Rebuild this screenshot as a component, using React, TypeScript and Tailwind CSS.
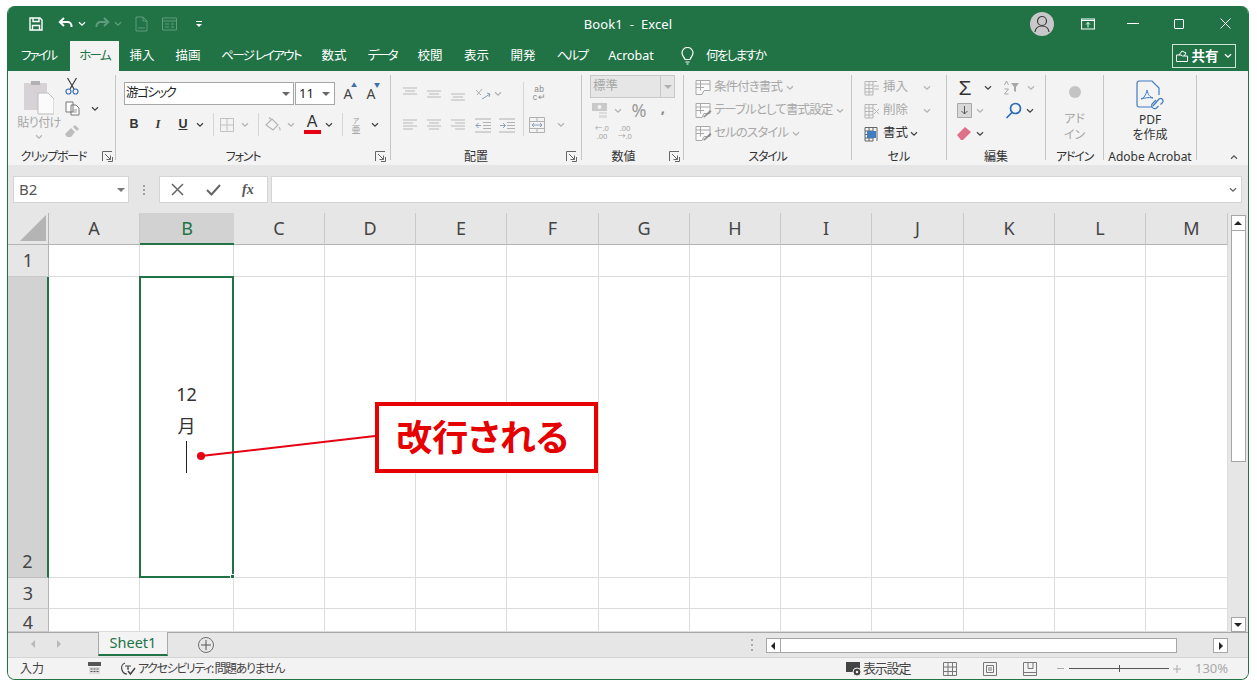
import React from "react";

const Chev = ({ c = "#555", up = false }: { c?: string; up?: boolean }) => (
  <svg width="10" height="6" viewBox="0 0 10 6" fill="none" className={up ? "rotate-180" : ""}>
    <path d="M2 1.200 5 4.200 8 1.200" stroke={c} strokeWidth="1.300" />
  </svg>
);
const G = "#b4b4b4";
const Launcher = () => (
  <svg width="11" height="11" viewBox="0 0 11 11" fill="none" stroke="#666">
    <path d="M.5 10V.5H10M3 3l5.500 5.500M8.500 4.500v4h-4M10.500 6v4.500H6" strokeWidth="1" />
  </svg>
);
const Sep = () => <div className="w-px h-[85px] mt-[4px] bg-[#c6c6c6] shrink-0" />;
const VSep = () => <div className="w-px h-[23px] bg-[#d6d6d6] shrink-0" />;
const Tri = ({ d, c = "#222" }: { d: "l" | "r" | "u" | "d"; c?: string }) => {
  const p = { l: "M6 1v8L2 5z", r: "M3 1v8l4-4z", u: "M1 7h8L5 3z", d: "M1 3h8L5 7z" }[d];
  return (
    <svg width="10" height="10" viewBox="0 0 10 10">
      <path d={p} fill={c} />
    </svg>
  );
};
const Lines = ({ kind }: { kind: string }) => {
  const rows: Record<string, string> = {
    t: "M2 3h14M4 6h10M2 9h14",
    m: "M2 6h14M4 9h10M2 12h14",
    b: "M2 9h14M4 12h10M2 15h14",
    l: "M2 4h14M2 7h10M2 10h14M2 13h10",
    c: "M2 4h14M4 7h10M2 10h14M4 13h10",
    r: "M2 4h14M6 7h10M2 10h14M6 13h10",
  };
  return (
    <svg width="18" height="18" viewBox="0 0 18 18" fill="none" stroke="#b9b9b9">
      <path d={rows[kind]} />
    </svg>
  );
};
const Indent = ({ flip }: { flip?: boolean }) => (
  <svg width="18" height="18" viewBox="0 0 18 18" fill="none" stroke="#b0b0b0">
    <path d="M1 3h16M9 6.500h8M9 9.500h8M9 12.500h8M1 16h16" />
    <path d={flip ? "M2 9.500h5M5 7l2.500 2.500L5 12" : "M7 9.500H2M4.500 7 2 9.500 4.500 12"} stroke="#8aa0b8" />
  </svg>
);
const Group = ({
  w,
  label,
  launcher,
  tight,
  children,
}: {
  w: string;
  label: string;
  launcher?: string;
  tight?: boolean;
  children: React.ReactNode;
}) => (
  <div className={`${w} h-full shrink-0 flex flex-col`}>
    <div className="h-[75px]">{children}</div>
    <div className="h-[19px] pt-[2px] flex items-center">
      <div className={`flex-1 text-center text-[12px] text-[#333] whitespace-nowrap ${tight ? "tracking-[-1.200px]" : ""}`}>{label}</div>
      {launcher && (
        <div className={`${launcher} flex justify-center items-center`}>
          <Launcher />
        </div>
      )}
    </div>
  </div>
);
const StyleIcon = ({ brush }: { brush?: boolean }) => (
  <svg width="17" height="17" viewBox="0 0 17 17" fill="none" stroke="#a8a8a8">
    <path d="M1 1.500h14v10H9l-2 4H1z" fill="#fafafa" />
    <path d="M1 5h14M1 8.500h8M5.500 1.500v10" />
    {brush && <path d="M8 15l7-7 1.500 1.500-7 6z" fill="#8d8d8d" stroke="none" />}
  </svg>
);
const CellIcon = ({ x, dark }: { x?: boolean; dark?: boolean }) => {
  const s = dark ? "#666" : "#b5b5b5";
  return (
    <svg width="16" height="16" viewBox="0 0 16 16" fill="none" stroke={s}>
      <path d="M1 1.500h12M1 5h8M1 8.500h8M1 12h8M1 15h8M1 1.500V15M5 1.500V15M9 1.500V15" />
      {x ? <path d="M10 6l5 5M15 6l-5 5" /> : dark ? <path d="M3 5h9v7H3z" fill="#3f7cc0" stroke="none" /> : <path d="M10 6h5M10 9h5" />}
      {dark && <path d="M13 1.500V15" />}
    </svg>
  );
};

const cols = ["A", "B", "C", "D", "E", "F", "G", "H", "I", "J", "K", "L", "M"];
const RowHead = ({ n, active, low }: { n: string; active?: boolean; low?: boolean }) => (
  <div
    className={`flex justify-center text-[18px] text-[#444] ${
      active
        ? "items-end pb-[2px] bg-[#d2d2d2] border-r-2 border-r-[#217346] border-b border-b-[#bdbdbd]"
        : "items-center bg-[#e6e6e6] border-r border-r-[#b4b4b4] border-b border-b-[#c9c9c9]"
    } ${low ? "pt-[4px] overflow-hidden" : ""}`}
  >
    {n}
  </div>
);
const Cell = () => <div className="bg-white border-r border-b border-[#dcdcdc]" />;

export default function App() {
  return (
    <div className="relative w-[1257px] h-[687px] bg-white pt-[6px] pl-[7px] font-['Noto_Sans','Noto_Sans_CJK_JP',sans-serif] [font-feature-settings:'palt'] overflow-hidden">
      <div className="w-[1242px] h-[674px] flex flex-col border-x border-b border-[#217346] rounded-[8px] overflow-hidden bg-[#e6e6e6]">
        {/* Title bar */}
        <div className="h-[35px] shrink-0 bg-[#217346] flex items-center text-white">
          <div className="ml-[21px] w-[14px] flex justify-center">
            <svg width="14" height="14" viewBox="0 0 14 14" fill="none" stroke="#fff" strokeWidth="1.400">
              <path d="M1 1h10l2 2v10H1z" />
              <path d="M4 1v3.500h6V1M3.500 13V8.500h7V13" />
            </svg>
          </div>
          <div className="ml-[15px] w-[16px] flex justify-center">
            <svg width="16" height="14" viewBox="0 0 16 14" fill="none" stroke="#fff" strokeWidth="2">
              <path d="M6 1 1.800 5 6 9M2 5h7.500a4 4 0 0 1 4 4v1" />
            </svg>
          </div>
          <div className="ml-[3px]"><Chev c="#fff" /></div>
          <div className="ml-[7px] w-[16px] flex justify-center">
            <svg width="16" height="14" viewBox="0 0 16 14" fill="none" stroke="#5f9c7d" strokeWidth="2">
              <path d="M10 1l4.200 4L10 9M14 5H6.500a4 4 0 0 0-4 4v1" />
            </svg>
          </div>
          <div className="ml-[3px]"><Chev c="#5f9c7d" /></div>
          <div className="ml-[11px] w-[14px] flex justify-center">
            <svg width="13" height="16" viewBox="0 0 13 16" fill="none" stroke="#5f9c7d">
              <path d="M1 1h7l4 4v10H1zM8 1v4h4M3 12h7" />
            </svg>
          </div>
          <div className="ml-[13px] w-[16px] flex justify-center">
            <svg width="15" height="14" viewBox="0 0 15 14" fill="none" stroke="#5f9c7d">
              <path d="M.5 1h14v12H.5zM.5 4h14M3 7h4M9 7h3M3 10h4M9 10h3" />
            </svg>
          </div>
          <div className="ml-[19px] w-[6px] flex flex-col items-center gap-[2px]">
            <div className="w-[6px] h-px bg-white" />
            <svg width="6" height="3" viewBox="0 0 6 3"><path d="M0 0h6L3 3z" fill="#fff" /></svg>
          </div>
          <div className="ml-[326px] w-[200px] text-center text-[13px] tracking-[0.1px] pt-[3px]">Book1&nbsp; -&nbsp; Excel</div>
          <div className="ml-[302px] w-[24px] h-[24px] rounded-full bg-[#c8c8c8] flex items-center justify-center">
            <svg width="16" height="18" viewBox="0 0 16 18" fill="none" stroke="#3a3a3a" strokeWidth="1.200">
              <circle cx="8" cy="6" r="4.500" />
              <path d="M1 17c.500-4 3-6 7-6s6.500 2 7 6" />
            </svg>
          </div>
          <div className="ml-[27px] w-[14px] flex justify-center">
            <svg width="14" height="12" viewBox="0 0 14 12" fill="none" stroke="#fff">
              <path d="M.5 1h13v10H.5zM.5 2.500h13" strokeWidth="1.200" />
              <path d="M7 9.500V4.500M5 6.500l2-2 2 2" />
            </svg>
          </div>
          <div className="ml-[32px] w-[12px] h-px bg-white" />
          <div className="ml-[35px] w-[10px] h-[10px] border border-white rounded-[1px]" />
          <div className="ml-[36px] w-[11px] flex justify-center">
            <svg width="11" height="11" viewBox="0 0 11 11" stroke="#fff"><path d="M.5.500l10 10M10.500.500l-10 10" /></svg>
          </div>
        </div>
        {/* Tabs */}
        <div className="h-[30px] shrink-0 bg-[#217346] flex items-stretch text-white text-[12.500px] whitespace-nowrap">
          <div className="w-[62px] flex items-center justify-center pr-[1px] tracking-[-2px]">ファイル</div>
          <div className="w-[49px] flex items-center justify-center bg-[#f3f3f3] text-[#217346] tracking-[-1.700px]">ホーム</div>
          <div className="w-[46px] flex items-center justify-center">挿入</div>
          <div className="w-[46px] flex items-center justify-center">描画</div>
          <div className="w-[100px] flex items-center justify-center tracking-[-1.700px]">ページ レイアウト</div>
          <div className="w-[46px] flex items-center justify-center">数式</div>
          <div className="w-[50px] flex items-center justify-center tracking-[-2px]">データ</div>
          <div className="w-[46px] flex items-center justify-center">校閲</div>
          <div className="w-[47px] flex items-center justify-center">表示</div>
          <div className="w-[46px] flex items-center justify-center">開発</div>
          <div className="w-[52px] flex items-center justify-center tracking-[-1.700px]">ヘルプ</div>
          <div className="w-[66px] flex items-center justify-center">Acrobat</div>
          <div className="ml-[16px] w-[14px] flex items-center justify-center">
            <svg width="13" height="18" viewBox="0 0 13 18" fill="none" stroke="#fff" strokeWidth="1.200">
              <path d="M4 12.500C3.500 10 1 9 1 6a5.500 5.500 0 0 1 11 0c0 3-2.500 4-3 6.500zM4.500 15h4M5.500 17h2" />
            </svg>
          </div>
          <div className="ml-[12px] flex items-center tracking-[-1.700px]">何をしますか</div>
          <div className="ml-auto mr-[12px] mt-[3px] mb-[3px] w-[64px] border border-[#cfe3d8] flex items-center justify-center gap-[4px] text-[13.500px] font-bold">
            <svg width="12" height="12" viewBox="0 0 12 12" fill="none" stroke="#fff">
              <path d="M.5 5v6.500h11V6H6.500L5 5zM3 5l3-4 4 2-2 3" />
            </svg>
            共有
            <Chev c="#fff" />
          </div>
        </div>
        {/* Ribbon */}
        <div className="h-[94px] shrink-0 bg-[#f3f3f3] flex items-start">
          <Group w="w-[107px]" label="クリップボード" launcher="w-[16px]" tight>
            <div className="flex">
              <div className="ml-[10px] w-[42px] flex flex-col items-center pt-[8px]">
                <svg width="30" height="36" viewBox="0 0 30 36" fill="none">
                  <path d="M0 4h23v27H0z" fill="#d6d2d5" />
                  <path d="M7 2h9v4H7z" fill="#b5b0b3" />
                  <path d="M14 14h10l6 6v15H14z" fill="#fbfbfb" stroke="#bdbdbd" />
                </svg>
                <div className="text-[12px] leading-[16px] text-[#a6a6a6] whitespace-nowrap tracking-[-0.500px]">貼り付け</div>
                <div className="mt-[3px]"><Chev c={G} /></div>
              </div>
              <div className="ml-[3px] w-[18px] flex flex-col items-center pt-[6px]">
                <svg width="14" height="18" viewBox="0 0 14 18" fill="none" stroke="#3c3c3c">
                  <path d="M2.500 1l6.500 11M11.500 1 5 12" strokeWidth="1.200" />
                  <circle cx="3.500" cy="14.500" r="2.500" stroke="#3a70b0" strokeWidth="1.200" />
                  <circle cx="10.500" cy="14.500" r="2.500" stroke="#3a70b0" strokeWidth="1.200" />
                </svg>
                <svg className="mt-[6px]" width="15" height="15" viewBox="0 0 15 15" fill="#fff" stroke="#777">
                  <path d="M1 1h7v10H1zM6 4h5l3 3v7H6z" />
                  <path d="M8 9h4M8 11h4" stroke="#999" />
                </svg>
                <svg className="mt-[9px]" width="14" height="13" viewBox="0 0 14 13" fill="#bdbdbd">
                  <path d="M0 9l6-6 4 4-4 5H2zM8 2l2-2 4 4-2 2z" />
                </svg>
              </div>
              <div className="ml-[9px] pt-[35px]"><Chev c="#444" /></div>
            </div>
          </Group>
          <Sep />
          <Group w="w-[274px]" label="フォント" launcher="w-[20px]" tight>
            <div className="pl-[8px] pt-[11px]">
              <div className="flex items-center h-[23px]">
                <div className="w-[170px] h-[23px] bg-white border border-[#a6a6a6] flex items-center pl-[1px] text-[12.500px] text-[#222]">
                  <span className="flex-1 tracking-[-1.500px]">游ゴシック</span>
                  <span className="w-[12px]"><Tri d="d" c="#666" /></span>
                </div>
                <div className="ml-px w-[40px] h-[23px] bg-white border border-[#a6a6a6] flex items-center pl-[3px] text-[13px] text-[#222]">
                  <span className="flex-1">11</span>
                  <span className="w-[13px]"><Tri d="d" c="#666" /></span>
                </div>
                <div className="ml-[3px] w-[20px] text-center text-[14px] text-[#444] relative">A<span className="absolute top-[-2px] left-[13px] text-[6px] text-[#3a70b0]">▲</span></div>
                <div className="ml-[3px] w-[20px] text-center text-[14px] text-[#444] relative">A<span className="absolute top-[-2px] left-[13px] text-[6px] text-[#3a70b0]">▼</span></div>
              </div>
              <div className="flex items-center h-[23px] mt-[8px] text-[#333]">
                <div className="w-[20px] text-center text-[12.500px] font-bold font-['Liberation_Sans']">B</div>
                <div className="ml-[4px] w-[20px] text-center text-[12.500px] font-bold italic font-['Liberation_Serif']">I</div>
                <div className="ml-[5px] w-[20px] text-center text-[12.500px] font-bold underline font-['Liberation_Sans']">U</div>
                <div className="ml-[2px]"><Chev c="#444" /></div>
                <div className="ml-[8px]"><VSep /></div>
                <div className="ml-[5px] w-[18px]">
                  <svg width="16" height="16" viewBox="0 0 16 16" fill="none" stroke="#c2c2c2">
                    <path d="M1.500 1.500h13v13h-13zM8 1.500v13M1.500 8h13" />
                  </svg>
                </div>
                <div className="ml-[3px]"><Chev c={G} /></div>
                <div className="ml-[8px]"><VSep /></div>
                <div className="ml-[5px] w-[18px]">
                  <svg width="18" height="17" viewBox="0 0 18 17" fill="none" stroke="#b5b5b5" strokeWidth="1.200">
                    <path d="M2 9 8 3l6 6-5 5z" />
                    <path d="M5 1.500 8 4M15 11c1 1.500 1.500 2.500 1 3.500" />
                  </svg>
                </div>
                <div className="ml-[4px]"><Chev c={G} /></div>
                <div className="ml-[7px] w-[18px] flex flex-col items-center">
                  <span className="font-['Liberation_Sans'] text-[16px] leading-[14px] text-[#333]">A</span>
                  <div className="w-[17px] h-[4px] bg-[#e60012] mt-[1px]" />
                </div>
                <div className="ml-[3px]"><Chev c="#444" /></div>
                <div className="ml-[8px]"><VSep /></div>
                <div className="ml-[5px] w-[16px] flex flex-col items-center text-[#9a9a9a] leading-[9px]">
                  <span className="text-[7px]">ア</span>
                  <span className="text-[9px]">亜</span>
                </div>
                <div className="ml-[6px]"><Chev c="#444" /></div>
              </div>
            </div>
          </Group>
          <Sep />
          <Group w="w-[190px]" label="配置" launcher="w-[20px]">
            <div className="flex pt-[11px]">
              <div className="w-[132px]">
                <div className="h-[23px] flex items-center">
                  <div className="ml-[10px]"><Lines kind="t" /></div>
                  <div className="ml-[6px]"><Lines kind="m" /></div>
                  <div className="ml-[6px]"><Lines kind="b" /></div>
                  <div className="ml-[7px] w-[18px]">
                    <svg width="18" height="18" viewBox="0 0 18 18" fill="none" stroke="#b0b0b0">
                      <path d="M3 10l5-6M2 5l5 5" />
                      <path d="M8 14l8-5M13 8l3 1-1 3" stroke="#8aa0b8" />
                    </svg>
                  </div>
                  <div className="ml-px"><Chev c={G} /></div>
                </div>
                <div className="h-[23px] mt-[8px] flex items-center">
                  <div className="ml-[10px]"><Lines kind="l" /></div>
                  <div className="ml-[6px]"><Lines kind="c" /></div>
                  <div className="ml-[6px]"><Lines kind="r" /></div>
                  <div className="ml-[7px]"><Indent /></div>
                  <div className="ml-[6px]"><Indent flip /></div>
                </div>
              </div>
              <div className="w-px h-[54px] bg-[#d6d6d6]" />
              <div>
                <div className="h-[23px] flex items-center ml-[6px] w-[18px] flex-col justify-center text-[8.500px] leading-[8px] text-[#8c8c8c] font-['Liberation_Mono']">
                  <span>ab</span>
                  <span>c↵</span>
                </div>
                <div className="h-[23px] mt-[8px] flex items-center ml-[4px]">
                  <svg width="18" height="18" viewBox="0 0 18 18" fill="none" stroke="#b0b0b0">
                    <path d="M1.500 1.500h15v15h-15zM1.500 5.500h15M1.500 12.500h15M9 1.500v4M9 12.500v4" />
                    <path d="M4 9h10M6 7 4 9l2 2M12 7l2 2-2 2" stroke="#8aa0b8" />
                  </svg>
                  <div className="ml-[10px]"><Chev c={G} /></div>
                </div>
              </div>
            </div>
          </Group>
          <Sep />
          <Group w="w-[101px]" label="数値" launcher="w-[18px]">
            <div className="pt-[4px]">
              <div className="ml-[8px] w-[85px] h-[23px] bg-[#e6e6e6] border border-[#c8c8c8] flex items-center text-[12.500px] text-[#a8a8a8]">
                <span className="flex-1 pl-[2px]">標準</span>
                <span className="w-[14px] h-full border-l border-[#c8c8c8] flex items-center justify-center"><Tri d="d" c="#b0b0b0" /></span>
              </div>
              <div className="h-[21px] mt-[2px] flex items-center">
                <div className="ml-[9px] w-[18px]">
                  <svg width="18" height="17" viewBox="0 0 18 17" fill="none">
                    <path d="M1 1h15v8H1z" fill="#c9c9c9" />
                    <circle cx="8.500" cy="5" r="2" fill="#f3f3f3" />
                    <path d="M8 10h8v2H8zM8 13h8v3H8z" fill="#dcdcdc" />
                  </svg>
                </div>
                <div className="ml-[4px]"><Chev c={G} /></div>
                <div className="ml-[7px] w-[18px] text-center text-[18px] text-[#9a9a9a]">%</div>
                <div className="ml-[6px] w-[18px] -mt-[6px] text-center text-[15px] font-bold text-[#888]">,</div>
              </div>
              <div className="h-[21px] flex items-center text-[7.500px] leading-[8px] text-[#a6a6a6] text-center">
                <div className="ml-[11px] w-[18px]">←.0<br />.00</div>
                <div className="ml-[5px] w-[18px]">.00<br />→.0</div>
              </div>
            </div>
          </Group>
          <Sep />
          <Group w="w-[167px]" label="スタイル" tight>
            <div className="pt-[5px] text-[12.500px] text-[#a8a8a8] whitespace-nowrap tracking-[-0.900px]">
              <div className="h-[23px] flex items-center ml-[11px]">
                <StyleIcon />
                <span className="ml-[2px]">条件付き書式</span>
                <span className="ml-[3px]"><Chev c={G} /></span>
              </div>
              <div className="h-[23px] flex items-center ml-[11px]">
                <StyleIcon brush />
                <span className="ml-[2px]">テーブルとして書式設定</span>
                <span className="ml-[3px]"><Chev c={G} /></span>
              </div>
              <div className="h-[23px] flex items-center ml-[11px]">
                <StyleIcon brush />
                <span className="ml-[2px]">セルのスタイル</span>
                <span className="ml-[3px]"><Chev c={G} /></span>
              </div>
            </div>
          </Group>
          <Sep />
          <Group w="w-[94px]" label="セル">
            <div className="pt-[5px] text-[12.500px] text-[#a8a8a8] whitespace-nowrap">
              <div className="h-[23px] flex items-center ml-[12px]">
                <CellIcon />
                <span className="ml-[3px] w-[24px]">挿入</span>
                <span className="ml-[15px]"><Chev c={G} /></span>
              </div>
              <div className="h-[23px] flex items-center ml-[12px]">
                <CellIcon x />
                <span className="ml-[3px] w-[24px]">削除</span>
                <span className="ml-[15px]"><Chev c={G} /></span>
              </div>
              <div className="h-[23px] flex items-center ml-[12px] text-[#333]">
                <CellIcon dark />
                <span className="ml-[3px] w-[24px]">書式</span>
                <span className="ml-[2px]"><Chev c="#444" /></span>
              </div>
            </div>
          </Group>
          <Sep />
          <Group w="w-[98px]" label="編集">
            <div className="pt-[5px]">
              <div className="h-[23px] flex items-center">
                <div className="ml-[10px] w-[16px] text-center text-[21px] leading-[23px] font-['Liberation_Sans'] text-[#333]">Σ</div>
                <div className="ml-[10px]"><Chev c="#444" /></div>
                <div className="ml-[10px] w-[18px]">
                  <svg width="18" height="15" viewBox="0 0 18 15" fill="none" stroke="#a8a8a8">
                    <path d="M1.500 5l2-4 2 4M1.500 9h4l-4 5h4" />
                    <path d="M8 3h8l-3 4v5l-2-1V7z" fill="#a8a8a8" stroke="none" />
                  </svg>
                </div>
                <div className="ml-[5px]"><Chev c={G} /></div>
              </div>
              <div className="h-[23px] flex items-center">
                <div className="ml-[10px] w-[16px]">
                  <svg width="15" height="15" viewBox="0 0 15 15" fill="#d8d8d8" stroke="#a8a8a8">
                    <path d="M.5.500h14v14H.5z" />
                    <path d="M7.500 3v8M4.500 8l3 3 3-3" stroke="#555" fill="none" />
                  </svg>
                </div>
                <div className="ml-[2px]"><Chev c={G} /></div>
                <div className="ml-[20px] w-[18px]">
                  <svg width="17" height="17" viewBox="0 0 17 17" fill="none" stroke="#2a6cb5" strokeWidth="1.700">
                    <circle cx="10.500" cy="6.500" r="5" />
                    <path d="M7 10.500 1.500 16" />
                  </svg>
                </div>
                <div className="ml-[2px]"><Chev c="#444" /></div>
              </div>
              <div className="h-[23px] flex items-center">
                <div className="ml-[10px] w-[16px]">
                  <svg width="16" height="14" viewBox="0 0 16 14">
                    <path d="M0 8l8-8 6 5-8 8H4z" fill="#e0708a" />
                  </svg>
                </div>
                <div className="ml-[2px]"><Chev c="#444" /></div>
              </div>
            </div>
          </Group>
          <Sep />
          <Group w="w-[57px]" label="アドイン" tight>
            <div className="flex flex-col items-center pt-[15px] text-[12px] text-[#a8a8a8] leading-[16px]">
              <div className="w-[12px] h-[12px] rounded-full bg-[#c4c4c4] mb-[13px]" />
              <div>アド</div>
              <div>イン</div>
            </div>
          </Group>
          <Sep />
          <Group w="w-[92px]" label="Adobe Acrobat">
            <div className="flex flex-col items-center pt-[9px] text-[12px] text-[#333] leading-[15px]">
              <svg width="28" height="30" viewBox="0 0 28 30" fill="none" stroke="#3f7cc0" strokeWidth="1.200">
                <path d="M16 27H3a2 2 0 0 1-2-2V3a2 2 0 0 1 2-2h13l7 7v7" />
                <path d="M5 19c3-1 5-4 6-9 1 5 3 7 6 8-5-1-8 0-12 1z" strokeWidth="1" />
                <path d="M17 26l6-7a2.500 2.500 0 0 1 3.500 3.500l-2 2M20 20l-3 3a2.500 2.500 0 0 0 3.500 5l2-2" />
              </svg>
              <div className="mt-[2px]">PDF</div>
              <div>を作成</div>
            </div>
          </Group>
          <Sep />
          <div className="flex-1 h-full flex items-end justify-end pr-[9px] pb-[5px]">
            <Chev c="#555" up />
          </div>
        </div>
        {/* Formula bar */}
        <div className="h-[48px] shrink-0 bg-[#e6e6e6] flex items-start pt-[11px]">
          <div className="ml-[5px] w-[116px] h-[27px] bg-white border border-[#d4d4d4] flex items-center pl-[5px] pr-[2px] text-[15px] text-[#555]">
            <span className="flex-1">B2</span>
            <Tri d="d" c="#777" />
          </div>
          <div className="ml-[13px] w-[4px] h-[27px] flex flex-col items-center justify-center gap-[2px]">
            <div className="w-[2px] h-[2px] bg-[#a0a0a0]" />
            <div className="w-[2px] h-[2px] bg-[#a0a0a0]" />
            <div className="w-[2px] h-[2px] bg-[#a0a0a0]" />
          </div>
          <div className="ml-[13px] w-[109px] h-[27px] bg-white border border-[#d4d4d4] flex items-center">
            <svg className="ml-[11px]" width="13" height="13" viewBox="0 0 13 13" stroke="#666" strokeWidth="1.500"><path d="M1 1l11 11M12 1 1 12" /></svg>
            <svg className="ml-[22px]" width="15" height="12" viewBox="0 0 15 12" fill="none" stroke="#666" strokeWidth="2"><path d="M1 6l4.500 4.500L14 1" /></svg>
            <span className="ml-[21px] text-[14px] font-['Liberation_Serif'] italic font-bold text-[#555]">fx</span>
          </div>
          <div className="ml-[3px] w-[971px] h-[27px] bg-white border border-[#d4d4d4] flex items-center justify-end pr-[3px]">
            <Chev c="#666" />
          </div>
        </div>
        {/* Sheet */}
        <div className="h-[419px] shrink-0 flex overflow-hidden">
          <div className="w-[1220px] h-[419px] grid grid-cols-[41px_91px_94px_91px_91px_91px_92px_91px_91px_91px_92px_91px_91px_82px] grid-rows-[32px_32px_301px_31px_23px] border-r border-[#b4b4b4]">
            <div className="bg-[#e6e6e6] border-r border-b border-[#b4b4b4] flex items-end justify-end pr-[2px] pb-[3px]">
              <svg width="26" height="26" viewBox="0 0 26 26"><path d="M26 0v26H0z" fill="#b4b4b4" /></svg>
            </div>
            {cols.map((c) =>
              c === "B" ? (
                <div key={c} className="bg-[#d2d2d2] border-b-2 border-[#217346] flex items-center justify-center text-[18px] text-[#217346]">{c}</div>
              ) : (
                <div key={c} className={`bg-[#e6e6e6] border-r border-r-[#c9c9c9] border-b border-b-[#b4b4b4] flex items-center justify-center text-[18px] text-[#444] ${c === "M" ? "pl-[10px]" : ""}`}>{c}</div>
              )
            )}
            <RowHead n="1" />
            {cols.map((c) => <Cell key={c} />)}
            <RowHead n="2" active />
            {cols.map((c) =>
              c === "B" ? (
                <div key={c} className="relative z-10 -mt-px -ml-px bg-white border-2 border-[#217346] flex flex-col items-center pt-[100px] text-[18px] leading-[32px] text-[#333]">
                  <div>12</div>
                  <div>月</div>
                  <div className="w-px h-[32px] -mt-[1px] bg-[#222]" />
                  <div className="absolute -right-[3px] -bottom-[3px] w-[5px] h-[5px] bg-[#217346] border border-white" />
                </div>
              ) : (
                <Cell key={c} />
              )
            )}
            <RowHead n="3" />
            {cols.map((c) => <Cell key={c} />)}
            <RowHead n="4" low />
            {cols.map((c) => <Cell key={c} />)}
          </div>
          <div className="flex-1 flex flex-col items-center pt-[2px]">
            <div className="w-[15px] h-[16px] bg-white border border-[#a6a6a6] flex items-center justify-center"><Tri d="u" /></div>
            <div className="w-[15px] h-[231px] bg-white border-x border-b border-[#a6a6a6]" />
            <div className="flex-1" />
            <div className="w-[15px] h-[15px] bg-white border border-[#a6a6a6] flex items-center justify-center"><Tri d="d" /></div>
          </div>
        </div>
        {/* Sheet tabs bar */}
        <div className="h-[25px] shrink-0 bg-[#e6e6e6] border-t border-[#a8a8a8] flex items-start">
          <div className="ml-[21px] mt-[6px]"><Tri d="l" c="#b8b8b8" /></div>
          <div className="ml-[15px] mt-[6px]"><Tri d="r" c="#b8b8b8" /></div>
          <div className="ml-[34px] -mt-px w-[70px] h-[24px] bg-[#f3f3f3] border-x border-x-[#a8a8a8] border-b-2 border-b-[#217346] flex items-center justify-center text-[14.500px] text-[#217346]">Sheet1</div>
          <div className="ml-[30px] mt-[4px] w-[16px] h-[16px] rounded-full border border-[#707070] flex items-center justify-center text-[#555]">
            <svg width="10" height="10" viewBox="0 0 10 10" stroke="#555"><path d="M5 0v10M0 5h10" /></svg>
          </div>
          <div className="ml-[536px] mt-[6px] w-[3px] h-[12px] flex flex-col items-center justify-between">
            <div className="w-[2px] h-[2px] bg-[#a8a8a8]" />
            <div className="w-[2px] h-[2px] bg-[#a8a8a8]" />
            <div className="w-[2px] h-[2px] bg-[#a8a8a8]" />
          </div>
          <div className="ml-[13px] mt-[5px] w-[15px] h-[15px] bg-white border border-[#a6a6a6] flex items-center justify-center"><Tri d="l" /></div>
          <div className="mt-[5px] w-[396px] h-[15px] bg-white border border-l-0 border-[#a6a6a6]" />
          <div className="ml-[36px] mt-[5px] w-[15px] h-[15px] bg-white border border-[#a6a6a6] flex items-center justify-center"><Tri d="r" /></div>
        </div>
        {/* Status bar */}
        <div className="flex-1 bg-[#f3f3f3] border-t border-[#d4d4d4] flex items-center text-[12px] text-[#444] whitespace-nowrap">
          <div className="ml-[12px] w-[24px]">入力</div>
          <div className="ml-[44px] w-[14px]">
            <svg width="13" height="13" viewBox="0 0 13 13">
              <path d="M0 0h13v4H0z" fill="#555" />
              <path d="M1 5h11v7H1z" fill="#ddd" />
              <path d="M2.500 6.500h2v1h-2zM5.500 6.500h2v1h-2zM8.500 6.500h2v1h-2zM2.500 9h2v1h-2zM5.500 9h2v1h-2zM8.500 9h2v1h-2z" fill="#555" />
            </svg>
          </div>
          <div className="ml-[18px] w-[17px]">
            <svg width="16" height="16" viewBox="0 0 16 16" fill="none" stroke="#444" strokeWidth="1.200">
              <path d="M5 2C2 3 1 6 2 9s3 4 5 4" />
              <path d="M5 5h6M8 5v3M7 8l2 0" />
              <path d="M8 10l2.500 3L15 7" strokeWidth="1.500" />
            </svg>
          </div>
          <div className="ml-[1px] w-[146px] tracking-[-1.400px]">アクセシビリティ: 問題ありません</div>
          <div className="ml-[562px] w-[17px]">
            <svg width="16" height="14" viewBox="0 0 16 14">
              <path d="M0 0h14v10H0z" fill="#444" />
              <circle cx="11" cy="10" r="4" fill="#444" stroke="#f3f3f3" />
              <circle cx="11" cy="10" r="1.200" fill="#f3f3f3" />
            </svg>
          </div>
          <div className="text-[13px] w-[47px] tracking-[-1.200px]">表示設定</div>
          <div className="ml-[33px] w-[14px]">
            <svg width="14" height="14" viewBox="0 0 14 14" fill="none" stroke="#777"><path d="M.5.500h13v13H.5zM5 .5v13M9.500.500v13M.5 5h13M.5 9.500h13" /></svg>
          </div>
          <div className="ml-[26px] w-[14px]">
            <svg width="14" height="14" viewBox="0 0 14 14" fill="none" stroke="#777"><path d="M.5.500h13v13H.5zM3.500 3.500h7v7h-7zM5 6h4M5 8h4" /></svg>
          </div>
          <div className="ml-[26px] w-[14px]">
            <svg width="14" height="14" viewBox="0 0 14 14" fill="none" stroke="#777"><path d="M.5.500h13v13H.5zM.5 10.500h13M5 .5v6h5v-6" /></svg>
          </div>
          <div className="ml-[20px] w-[7px] h-px bg-[#aaa]" />
          <div className="ml-[5px] w-[100px] h-px bg-[#555] flex justify-center items-center">
            <div className="w-px h-[7px] bg-[#555]" />
          </div>
          <svg className="ml-[4px]" width="8" height="8" viewBox="0 0 8 8" stroke="#aaa"><path d="M4 0v8M0 4h8" /></svg>
          <div className="ml-[14px] text-[13px] text-[#a8a8a8]">130%</div>
        </div>
      </div>
      {/* Annotation */}
      <svg className="absolute left-[195px] top-[430px] z-20" width="185" height="32" viewBox="0 0 185 32" fill="none">
        <circle cx="6" cy="26" r="4" fill="#e60012" />
        <path d="M6 26 180 6" stroke="#e60012" strokeWidth="2" />
      </svg>
      <div className="absolute z-20 left-[375px] top-[402px] w-[223px] h-[71px] bg-white border-4 border-[#e60000] flex items-center justify-center pr-[8px] pb-[6px] text-[36px] font-bold text-[#e60000] font-['Noto_Sans_CJK_JP',sans-serif] [font-feature-settings:'normal']">改行される</div>
    </div>
  );
}
